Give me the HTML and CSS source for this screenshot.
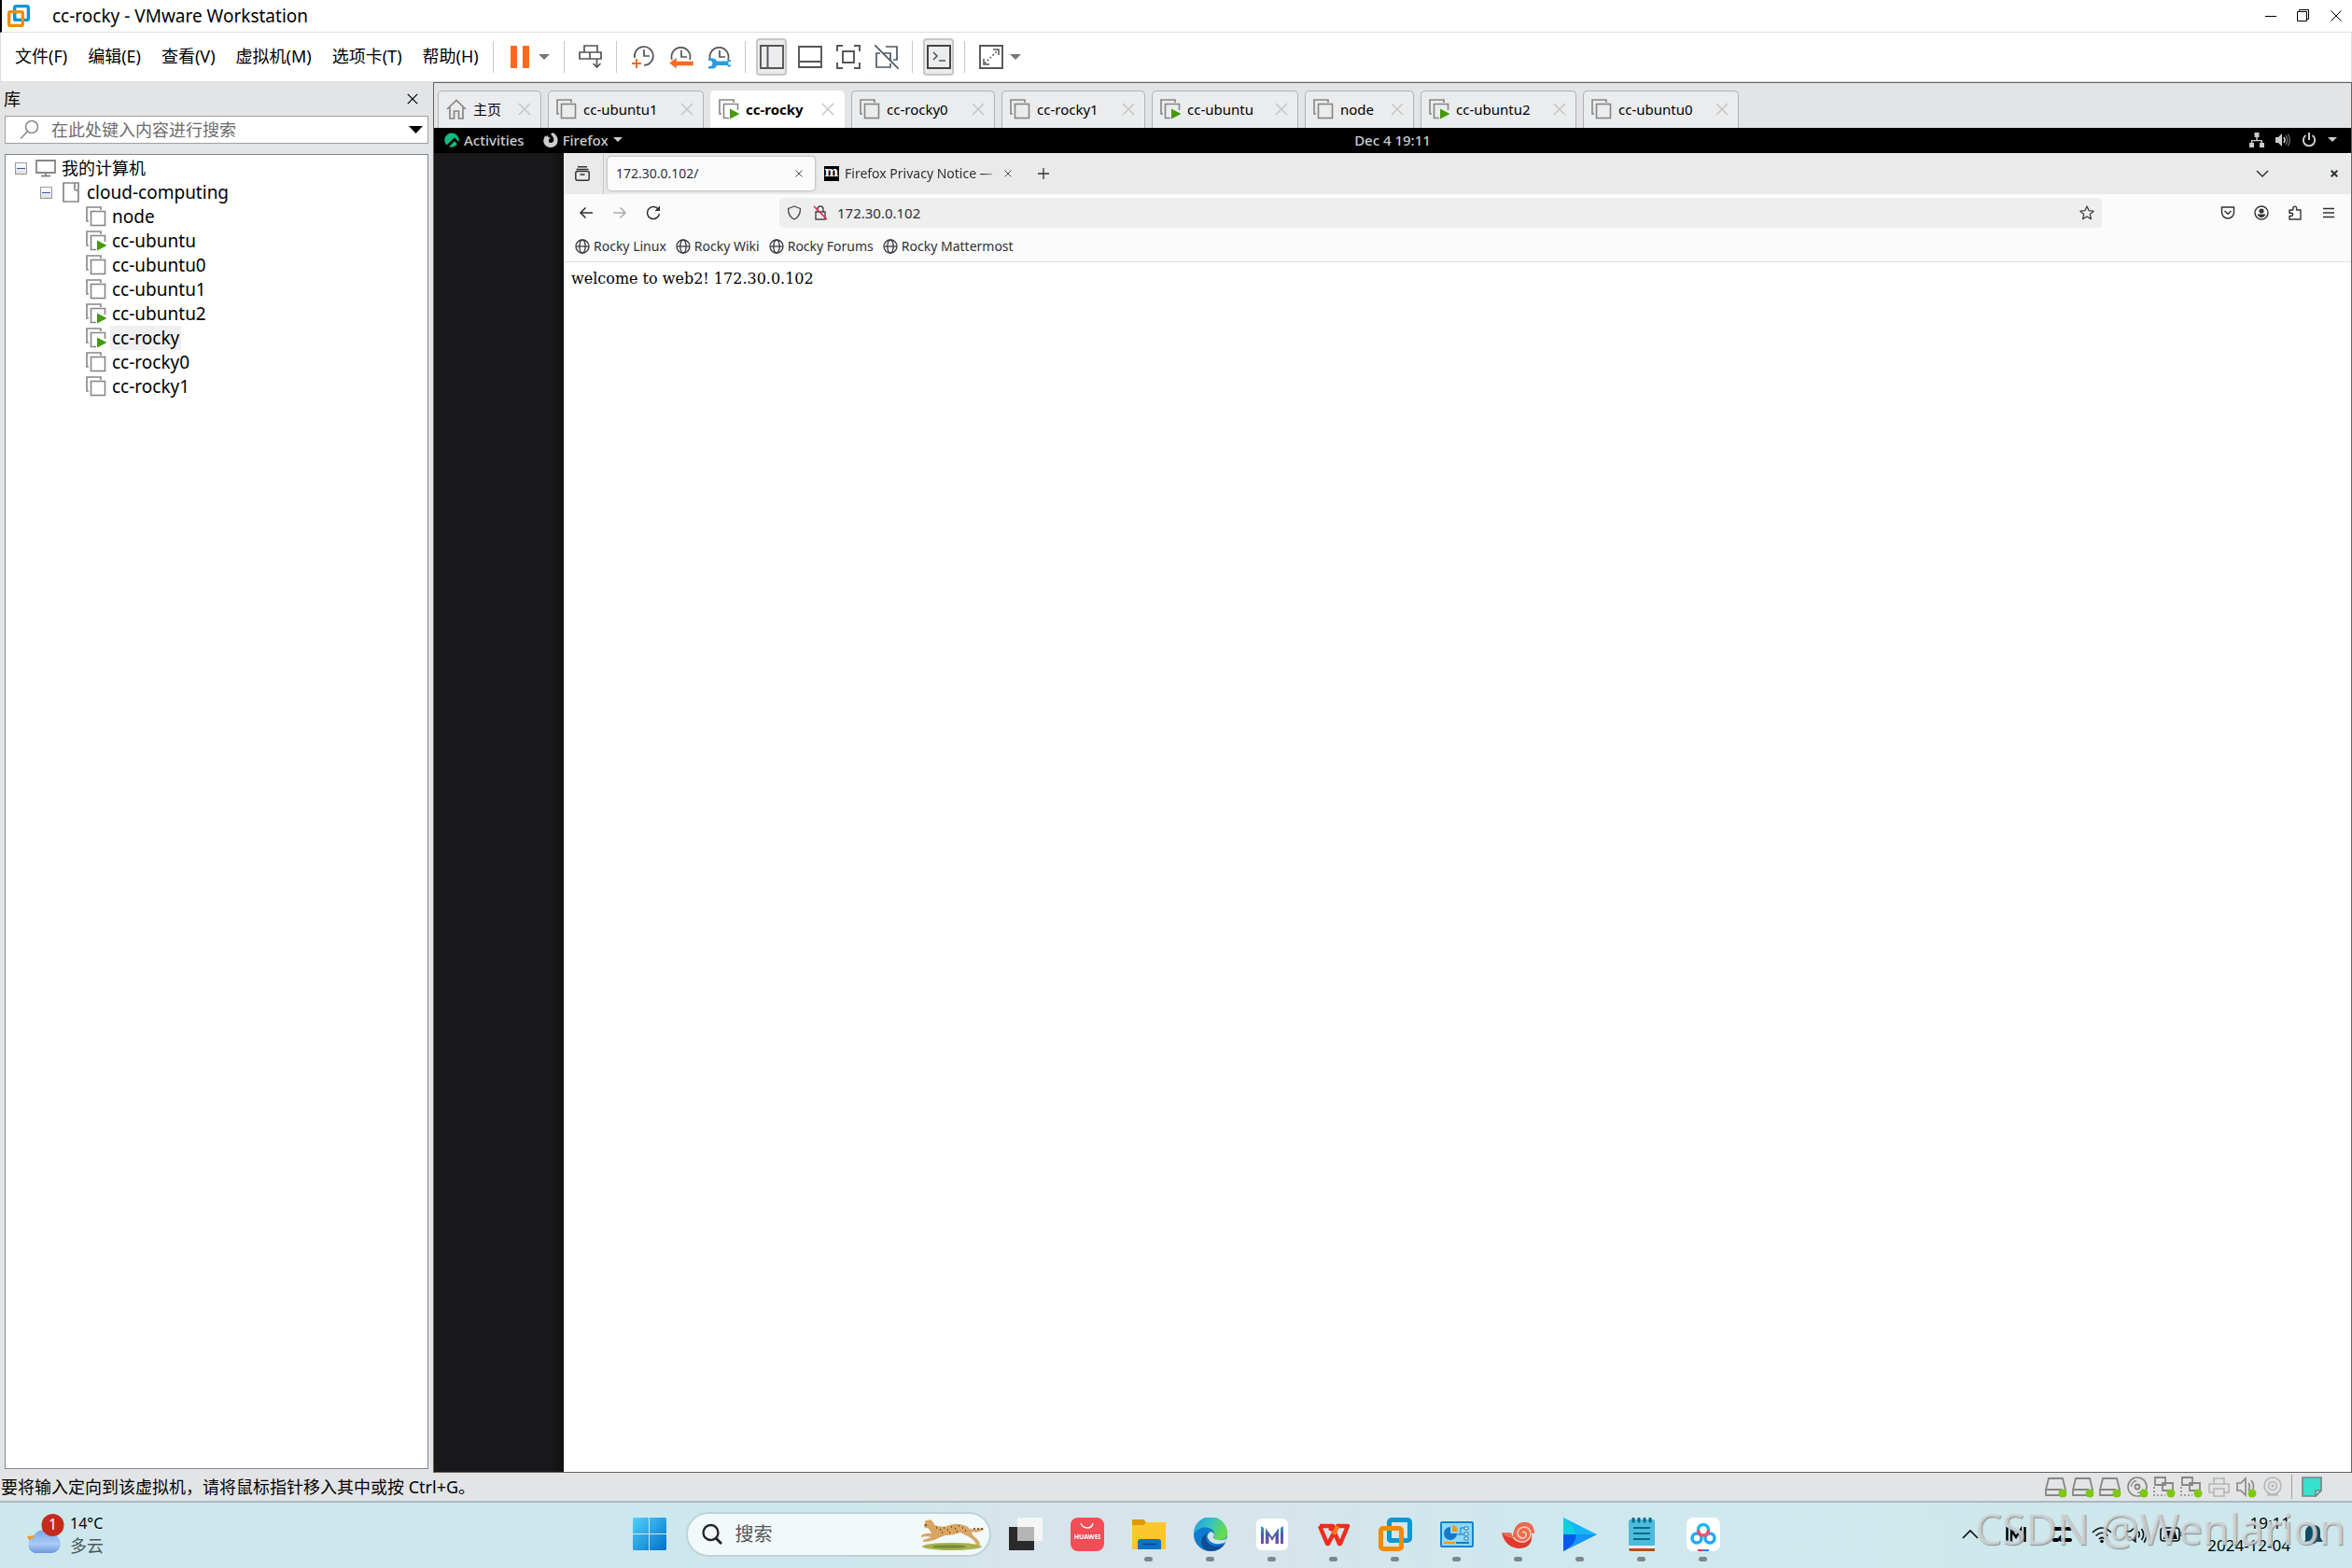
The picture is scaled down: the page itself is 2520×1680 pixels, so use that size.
FILE: index.html
```html
<!DOCTYPE html>
<html lang="zh-CN">
<head>
<meta charset="utf-8">
<title>cc-rocky - VMware Workstation</title>
<link rel="stylesheet" href="styles.css">
</head>
<body>
<svg class="defs" aria-hidden="true">
  <symbol id="vm" viewBox="0 0 22 22"><path d="M3 16H1V1h15v3" fill="none" stroke="#868686" stroke-width="1.6"/><rect x="5.5" y="5.5" width="15" height="15" fill="none" stroke="#868686" stroke-width="1.6"/></symbol>
  <symbol id="vm-on" viewBox="0 0 22 22"><path d="M3 16H1V1h15v3" fill="none" stroke="#868686" stroke-width="1.6"/><path d="M11 20.5H5.500V5.500h15V12" fill="none" stroke="#868686" stroke-width="1.6"/><path d="M12 10.500l10.500 5.500-10.500 5.500z" fill="#459a0e"/></symbol>
  <symbol id="x" viewBox="0 0 14 14"><path d="M1 1l12 12M13 1L1 13" fill="none" stroke="currentColor" stroke-width="1.5"/></symbol>
  <symbol id="down" viewBox="0 0 12 6"><path d="M0 0h12L6 6z" fill="currentColor"/></symbol>
  <symbol id="clock" viewBox="0 0 26 26"><path d="M3 16A10 10 0 1 1 22 16" fill="none" stroke="#555" stroke-width="1.7"/><path d="M13 6v7h6" fill="none" stroke="#555" stroke-width="1.7"/></symbol>
  <symbol id="globe" viewBox="0 0 16 16"><g fill="none" stroke="#3a3a40" stroke-width="1.3"><circle cx="8" cy="8" r="7"/><ellipse cx="8" cy="8" rx="3.200" ry="7"/><path d="M1 8h14"/></g></symbol>
  <symbol id="vmware" viewBox="0 0 36 36"><rect x="11.500" y="2.500" width="22" height="22" rx="2.500" fill="none" stroke="#0a98d6" stroke-width="5"/><rect x="2.500" y="11.500" width="22" height="22" rx="2.500" fill="none" stroke="#f38b00" stroke-width="5"/><path d="M11.500 14v8.500q0 2 2 2H20" fill="none" stroke="#0a98d6" stroke-width="5"/><path d="M9 11.500h8" stroke="#f38b00" stroke-width="5"/></symbol>
  <symbol id="drive" viewBox="0 0 26 24"><path d="M5 3h15l3 12v6H2v-6zM2 15h17" fill="none" stroke="#868686" stroke-width="1.800"/><circle cx="20" cy="19" r="4.500" fill="#7ec814"/></symbol>
  <symbol id="net" viewBox="0 0 26 24"><path d="M3 2h11v8H3zM11 8h11v8H11z" fill="#e3e4e6" stroke="#868686" stroke-width="1.800"/><path d="M2 12v9h12" fill="none" stroke="#868686" stroke-width="1.600" stroke-dasharray="2 2"/><circle cx="20" cy="19" r="4.500" fill="#7ec814"/></symbol>
</svg>

<header class="titlebar">
  <svg class="i24" viewBox="0 0 36 36"><use href="#vmware"/></svg>
  <h1 class="titlebar-text">cc-rocky - VMware Workstation</h1>
  <div class="window-controls">
    <button class="wc" aria-label="最小化"><svg class="i12" viewBox="0 0 12 12"><path d="M0 6.500h12" stroke="#000"/></svg></button>
    <button class="wc" aria-label="还原"><svg class="i14" viewBox="0 0 14 14"><path d="M.5 2.500h10v10H.500zM2.500 2V.500h10v10H11" fill="none" stroke="#000"/></svg></button>
    <button class="wc" aria-label="关闭"><svg class="i12" viewBox="0 0 12 12"><path d="M.5.5l11 11M11.500.500l-11 11" stroke="#000"/></svg></button>
  </div>
</header>

<div class="menubar">
  <nav class="menus">
    <button class="menu">文件(F)</button><button class="menu">编辑(E)</button><button class="menu">查看(V)</button><button class="menu">虚拟机(M)</button><button class="menu">选项卡(T)</button><button class="menu">帮助(H)</button>
  </nav>
  <span class="sep"></span>
  <button class="tool" aria-label="挂起"><svg class="i26" viewBox="0 0 26 26"><path d="M3 1h7v24H3zM16 1h7v24h-7z" fill="#fc6a21"/></svg></button>
  <button class="tool-drop" aria-label="电源选项"><svg class="arrow"><use href="#down"/></svg></button>
  <span class="sep"></span>
  <button class="tool" aria-label="发送按键"><svg class="i26" viewBox="0 0 26 26"><path d="M6 1h14v7H6zM1 8h11v7H1zM12 8h12v7H12zM19.500 15v8M15.500 20l4 4 4-4" fill="none" stroke="#555" stroke-width="1.700"/></svg></button>
  <span class="sep"></span>
  <div class="tool-group">
    <button class="tool" aria-label="拍摄快照"><svg class="i26" viewBox="0 0 26 26"><path d="M4 14A10 10 0 1 1 14 22M14 5v7h6" fill="none" stroke="#555" stroke-width="1.700"/><path d="M1 20h10M6 15v10" stroke="#fc6a21" stroke-width="2"/></svg></button>
    <button class="tool" aria-label="恢复快照"><svg class="i26" viewBox="0 0 26 26"><use href="#clock"/><path d="M0 19.500l8-6v4h18v5H8v3.500z" fill="#fc6a21" stroke="#fff" stroke-width=".5"/></svg></button>
    <button class="tool" aria-label="管理快照"><svg class="i26" viewBox="0 0 26 26"><use href="#clock"/><path d="M1 14.500h4.500a5 5 0 0 1 4.500 3h11l1-1.500h3v2h-2.500v3.500H25v2h-3l-1-1.500H10a5 5 0 0 1-4.500 3.500H1v-2.500h3l1.500-3.500L4 17H1z" fill="#2e9be0"/></svg></button>
  </div>
  <span class="sep"></span>
  <div class="tool-group">
    <button class="tool tool--on" aria-label="显示库"><svg class="i26" viewBox="0 0 26 26"><path d="M1 1h24v24H1zM8.500 1v24" fill="none" stroke="#555" stroke-width="1.900"/></svg></button>
    <button class="tool" aria-label="缩略图栏"><svg class="i26" viewBox="0 0 26 26"><path d="M1 2h24v22H1zM1 18h24" fill="none" stroke="#555" stroke-width="1.900"/></svg></button>
    <button class="tool" aria-label="全屏"><svg class="i26" viewBox="0 0 26 26"><path d="M1 7V1h6M19 1h6v6M25 19v6h-6M7 25H1v-6M7 7h12v12H7z" fill="none" stroke="#555" stroke-width="1.900"/></svg></button>
    <button class="tool" aria-label="Unity"><svg class="i26" viewBox="0 0 26 26"><path d="M12 2h12v14h-4M6 9H2v15h15v-4M9 9h8v8M0 0l26 26" fill="none" stroke="#4b5a66" stroke-width="1.700"/></svg></button>
  </div>
  <span class="sep"></span>
  <button class="tool tool--on" aria-label="控制台"><svg class="i26" viewBox="0 0 26 26"><path d="M1 1h24v24H1z" fill="none" stroke="#444" stroke-width="2"/><path d="M7 8l4 4-4 4M13 17h7" fill="none" stroke="#555" stroke-width="1.600"/></svg></button>
  <span class="sep"></span>
  <button class="tool" aria-label="拉伸"><svg class="i26" viewBox="0 0 26 26"><path d="M1 1h24v24H1z" fill="none" stroke="#555" stroke-width="1.900"/><path d="M15 5h6v6M5 15v6h6" fill="none" stroke="#555" stroke-width="1.500"/><path d="M6 20L20 6" stroke="#555" stroke-width="1.500" stroke-dasharray="2 2"/></svg></button>
  <button class="tool-drop" aria-label="拉伸选项"><svg class="arrow"><use href="#down"/></svg></button>
</div>

<main class="workspace">
  <aside class="library">
    <div class="library-head"><h2 class="library-title">库</h2><button class="library-close" aria-label="关闭库"><svg class="i12"><use href="#x"/></svg></button></div>
    <div class="library-search">
      <svg class="i22" viewBox="0 0 22 22"><circle cx="14" cy="8" r="6.500" fill="none" stroke="#8a8a8a" stroke-width="1.600"/><path d="M9.500 13L2 20.500" stroke="#8a8a8a" stroke-width="1.600"/></svg>
      <input class="library-input" type="text" aria-label="搜索库" placeholder="在此处键入内容进行搜索">
      <svg class="search-arrow" viewBox="0 0 12 6" preserveAspectRatio="none"><path d="M0 0h12L6 6z"/></svg>
    </div>
    <ul class="tree">
      <li class="node"><span class="toggle"></span><svg class="i22" viewBox="0 0 22 22"><path d="M1 3h20v13H1zM11 16v4M6 19.500h10" fill="none" stroke="#868686" stroke-width="1.800"/></svg><span class="label label--cjk">我的计算机</span></li>
      <li class="node node--2"><span class="toggle"></span><svg class="i22" viewBox="0 0 22 22"><path d="M15 1H3v20h16V9M15 1v7q2 2 4 0V1z" fill="none" stroke="#868686" stroke-width="1.700"/></svg><span class="label">cloud-computing</span></li>
      <li class="node node--3"><svg class="i22"><use href="#vm"/></svg><span class="label">node</span></li>
      <li class="node node--3"><svg class="i22"><use href="#vm-on"/></svg><span class="label">cc-ubuntu</span></li>
      <li class="node node--3"><svg class="i22"><use href="#vm"/></svg><span class="label">cc-ubuntu0</span></li>
      <li class="node node--3"><svg class="i22"><use href="#vm"/></svg><span class="label">cc-ubuntu1</span></li>
      <li class="node node--3"><svg class="i22"><use href="#vm-on"/></svg><span class="label">cc-ubuntu2</span></li>
      <li class="node node--3"><svg class="i22"><use href="#vm-on"/></svg><span class="label label--selected">cc-rocky</span></li>
      <li class="node node--3"><svg class="i22"><use href="#vm"/></svg><span class="label">cc-rocky0</span></li>
      <li class="node node--3"><svg class="i22"><use href="#vm"/></svg><span class="label">cc-rocky1</span></li>
    </ul>
  </aside>

  <section class="vm">
    <div class="vm-tabs">
      <div class="vm-tab vm-tab--home"><svg class="i22" viewBox="0 0 22 22"><path d="M1 11L11 1.500 21 11M4 9v12h4.500v-8h5v8H18V9" fill="none" stroke="#868686" stroke-width="1.700"/></svg><span>主页</span><button class="vm-close" aria-label="关闭"><svg class="i14"><use href="#x"/></svg></button></div>
      <div class="vm-tab vm-tab--long"><svg class="i22"><use href="#vm"/></svg><span>cc-ubuntu1</span><button class="vm-close" aria-label="关闭"><svg class="i14"><use href="#x"/></svg></button></div>
      <div class="vm-tab vm-tab--active"><svg class="i22"><use href="#vm-on"/></svg><span>cc-rocky</span><button class="vm-close" aria-label="关闭"><svg class="i14"><use href="#x"/></svg></button></div>
      <div class="vm-tab vm-tab--mid"><svg class="i22"><use href="#vm"/></svg><span>cc-rocky0</span><button class="vm-close" aria-label="关闭"><svg class="i14"><use href="#x"/></svg></button></div>
      <div class="vm-tab vm-tab--mid"><svg class="i22"><use href="#vm"/></svg><span>cc-rocky1</span><button class="vm-close" aria-label="关闭"><svg class="i14"><use href="#x"/></svg></button></div>
      <div class="vm-tab vm-tab--ubuntu"><svg class="i22"><use href="#vm-on"/></svg><span>cc-ubuntu</span><button class="vm-close" aria-label="关闭"><svg class="i14"><use href="#x"/></svg></button></div>
      <div class="vm-tab vm-tab--short"><svg class="i22"><use href="#vm"/></svg><span>node</span><button class="vm-close" aria-label="关闭"><svg class="i14"><use href="#x"/></svg></button></div>
      <div class="vm-tab vm-tab--long"><svg class="i22"><use href="#vm-on"/></svg><span>cc-ubuntu2</span><button class="vm-close" aria-label="关闭"><svg class="i14"><use href="#x"/></svg></button></div>
      <div class="vm-tab vm-tab--long"><svg class="i22"><use href="#vm"/></svg><span>cc-ubuntu0</span><button class="vm-close" aria-label="关闭"><svg class="i14"><use href="#x"/></svg></button></div>
    </div>

    <div class="gnome">
      <div class="gnome-left">
        <button class="gnome-btn"><svg class="i16" viewBox="0 0 16 16"><path d="M2.500 13.500A7.700 7.700 0 1 1 15.500 10L11 5.500z" fill="#12b981"/><path d="M5 15.300L11 9.200l3 3Q10 17 5 15.300z" fill="#12b981"/></svg><span>Activities</span></button>
        <button class="gnome-btn"><svg class="i16" viewBox="0 0 16 16"><path d="M8 16A7.500 7 0 0 1 1 6l1-3 1 1.500L5 3l.500 2L8 6 6 7.500Q5.500 11 8.500 11 12 10.500 11 6 10 3 8 2l2-2q6 3 5.500 9A7.500 7 0 0 1 8 16z" fill="#ccc"/></svg><span>Firefox</span><svg class="gnome-arrow" viewBox="0 0 12 6"><use href="#down"/></svg></button>
      </div>
      <time class="gnome-clock">Dec 4 19:11</time>
      <div class="gnome-right">
        <svg class="i16" viewBox="0 0 16 16"><path d="M5.500 0h5v5h-5zM0 11h5v5H0zM11 11h5v5h-5zM7.300 5h1.400v3H14v3h-1.400V9.200H3.400V11H2V8h5.300z" fill="#ccc"/></svg>
        <svg class="i16" viewBox="0 0 16 16"><path d="M0 5h3l4-4v14l-4-4H0z" fill="#ccc"/><path d="M9 5q2 3 0 6" fill="none" stroke="#ccc" stroke-width="1.600"/><path d="M11 3q3.500 5 0 10M13.300 1.500q4 6.500 0 13" fill="none" stroke="#666" stroke-width="1.400"/></svg>
        <svg class="i16" viewBox="0 0 16 16"><path d="M4.500 3a6.200 6.200 0 1 0 7 0M8 0v8" fill="none" stroke="#ccc" stroke-width="2"/></svg>
        <svg class="gnome-arrow" viewBox="0 0 12 6"><use href="#down"/></svg>
      </div>
    </div>

    <div class="desktop">
      <div class="browser">
        <div class="tabstrip">
          <button class="ff-view" aria-label="Firefox View"><svg class="i16" viewBox="0 0 16 16"><path d="M3 .8h10M1.500 3.500h13" stroke="#333" stroke-width="1.400"/><rect x=".8" y="5.500" width="14.400" height="9.700" rx="2" fill="none" stroke="#333" stroke-width="1.500"/><path d="M5.500 9h5" stroke="#333" stroke-width="1.500"/></svg></button>
          <div class="ff-tab ff-tab--active"><span class="ff-tab-text">172.30.0.102/</span><button class="ff-close" aria-label="Close"><svg class="i8"><use href="#x"/></svg></button></div>
          <div class="ff-tab"><span class="moz">m</span><span class="ff-tab-text ff-tab-text--fade">Firefox Privacy Notice — Mozilla</span><button class="ff-close" aria-label="Close"><svg class="i8"><use href="#x"/></svg></button></div>
          <button class="ff-new" aria-label="New tab"><svg class="i12" viewBox="0 0 12 12"><path d="M6 0v12M0 6h12" stroke="#333" stroke-width="1.300"/></svg></button>
          <button class="ff-btn ff-list" aria-label="List tabs"><svg class="i14" viewBox="0 0 14 14"><path d="M1 4l6 6 6-6" fill="none" stroke="#333" stroke-width="1.500"/></svg></button>
          <button class="ff-btn ff-quit" aria-label="Close window"><svg class="i8" viewBox="0 0 8 8"><path d="M.7.7l6.600 6.600M7.300.7L.7 7.300" stroke="#2e3436" stroke-width="2"/></svg></button>
        </div>
        <div class="navbar">
          <button class="ff-btn" aria-label="Back"><svg class="i16" viewBox="0 0 16 16"><path d="M15 8H2M7.500 2.500L2 8l5.500 5.500" fill="none" stroke="#2e2e33" stroke-width="1.500"/></svg></button>
          <button class="ff-btn" aria-label="Forward"><svg class="i16" viewBox="0 0 16 16"><path d="M1 8h13M8.500 2.500L14 8l-5.500 5.500" fill="none" stroke="#aaa" stroke-width="1.500"/></svg></button>
          <button class="ff-btn" aria-label="Reload"><svg class="i16" viewBox="0 0 16 16"><path d="M13.500 4.500A6.500 6.500 0 1 0 14.500 9" fill="none" stroke="#2e2e33" stroke-width="1.500"/><path d="M15 .5V6H9.500z" fill="#2e2e33"/></svg></button>
          <div class="urlbar">
            <svg class="i16" viewBox="0 0 16 16"><path d="M8 1l6.500 2.500q0 8.500-6.500 11.500Q1.500 12 1.500 3.500z" fill="none" stroke="#444" stroke-width="1.300" stroke-linejoin="round"/></svg>
            <svg class="i16 lock" viewBox="0 0 16 16"><path d="M3 7h10v8H3zM5 7V4q0-3 3-3t3 3v3" fill="none" stroke="#444" stroke-width="1.400"/><path d="M1 1l14 14" stroke="#e22850" stroke-width="1.600"/></svg>
            <input class="url" type="text" aria-label="Address" value="172.30.0.102">
            <svg class="i16" viewBox="0 0 16 16"><path d="M8 1l2.100 4.700 5 .5-3.800 3.400 1.100 5L8 12l-4.400 2.600 1.100-5L.9 6.200l5-.5z" fill="none" stroke="#444" stroke-width="1.300" stroke-linejoin="round"/></svg>
          </div>
          <button class="ff-btn" aria-label="Pocket"><svg class="i16" viewBox="0 0 16 16"><path d="M1.500 2h13v5.500a6.500 6.500 0 0 1-13 0zM4.500 6L8 9.300 11.500 6" fill="none" stroke="#333" stroke-width="1.500"/></svg></button>
          <button class="ff-btn" aria-label="Account"><svg class="i16" viewBox="0 0 16 16"><circle cx="8" cy="8" r="7" fill="none" stroke="#333" stroke-width="1.400"/><circle cx="8" cy="6" r="2.600" fill="#333"/><path d="M3.500 9.500h9Q11 13 8 13T3.500 9.500z" fill="#333"/></svg></button>
          <button class="ff-btn" aria-label="Extensions"><svg class="i16" viewBox="0 0 16 16"><path d="M2 15V11.500h2a1.600 1.600 0 0 0 0-3.300H2V5h3.800V3a1.900 1.900 0 0 1 3.800 0v2H14v10z" fill="none" stroke="#333" stroke-width="1.400" stroke-linejoin="round"/></svg></button>
          <button class="ff-btn" aria-label="Menu"><svg class="i12" viewBox="0 0 12 12"><path d="M0 1.500h12M0 6h12M0 10.500h12" stroke="#333" stroke-width="1.300"/></svg></button>
        </div>
        <nav class="bookmarks">
          <a class="bookmark" href="#"><svg class="i16"><use href="#globe"/></svg>Rocky Linux</a>
          <a class="bookmark" href="#"><svg class="i16"><use href="#globe"/></svg>Rocky Wiki</a>
          <a class="bookmark" href="#"><svg class="i16"><use href="#globe"/></svg>Rocky Forums</a>
          <a class="bookmark" href="#"><svg class="i16"><use href="#globe"/></svg>Rocky Mattermost</a>
        </nav>
        <article class="webpage">welcome to web2! 172.30.0.102</article>
      </div>
    </div>
  </section>
</main>

<div class="statusbar">
  <p class="status-text">要将输入定向到该虚拟机，请将鼠标指针移入其中或按 Ctrl+G。</p>
  <div class="devices">
    <svg class="device"><use href="#drive"/></svg><svg class="device"><use href="#drive"/></svg><svg class="device"><use href="#drive"/></svg>
    <svg class="device" viewBox="0 0 26 24"><circle cx="13" cy="12" r="10" fill="none" stroke="#868686" stroke-width="1.600"/><circle cx="13" cy="12" r="2.500" fill="none" stroke="#868686" stroke-width="1.800"/><path d="M6.500 12A6.500 6.500 0 0 1 12 5.500M13 18.500q4 0 6-4" fill="none" stroke="#868686" stroke-width="1.400"/><circle cx="20" cy="19" r="4.500" fill="#7ec814"/></svg>
    <svg class="device"><use href="#net"/></svg><svg class="device"><use href="#net"/></svg>
    <svg class="device" viewBox="0 0 26 24"><path d="M8 9V3h11v6M8 18H3V9h21v9h-5M8 14h11v8H8z" fill="none" stroke="#b4b4b4" stroke-width="1.600"/></svg>
    <svg class="device" viewBox="0 0 26 24"><path d="M4 8h4l5-5v18l-5-5H4zM16 8q2.500 4 0 8M19 5q4.500 6 1 12" fill="none" stroke="#868686" stroke-width="1.600"/><circle cx="20" cy="19" r="4.500" fill="#7ec814"/></svg>
    <svg class="device" viewBox="0 0 26 24"><g fill="none" stroke="#b4b4b4" stroke-width="1.500"><circle cx="13" cy="11" r="9"/><circle cx="13" cy="11" r="4.500"/><path d="M8 19v2h10v-2"/></g><circle cx="13" cy="11" r="1.500" fill="#b4b4b4"/></svg>
  </div>
  <span class="status-sep"></span>
  <svg class="i22" viewBox="0 0 22 22"><path d="M1 1h20v14l-6 6H1z" fill="#36e2cb" stroke="#7d8585" stroke-width="1.700"/><path d="M15 21v-6h6z" fill="#9be9de" stroke="#7d8585" stroke-width="1.500"/></svg>
</div>

<footer class="taskbar">
  <button class="weather">
    <svg class="weather-icon" viewBox="0 0 42 46"><defs><linearGradient id="cl" x2="0" y2="1"><stop offset="0" stop-color="#7da5e8"/><stop offset=".6" stop-color="#a9cbf8"/><stop offset="1" stop-color="#6f96de"/></linearGradient></defs><path d="M18 8q6 16-16 17 4 11 14 9 12-4 9-16-2-7-7-10z" fill="#f29a25"/><path d="M10 43a9 9 0 0 1-1-17 10 10 0 0 1 18-3 10 10 0 0 1 2 20z" fill="url(#cl)"/><circle cx="29.500" cy="13" r="12" fill="#c42b1c"/></svg>
    <span class="badge">1</span>
    <span class="weather-text"><span class="temp">14°C</span><span class="sky">多云</span></span>
  </button>

  <div class="dock">
    <button class="app" aria-label="开始"><svg class="i36" viewBox="0 0 36 36"><defs><linearGradient id="wn" x2="1" y2="1"><stop offset="0" stop-color="#52d2fb"/><stop offset="1" stop-color="#016fca"/></linearGradient></defs><path d="M1 0h16v17H0V1zM18 0h17l1 1v16H18zM0 18h17v17H1l-1-1zM18 18h18v16l-1 1H18z" fill="url(#wn)"/></svg></button>
    <label class="search">
      <svg class="i24" viewBox="0 0 24 24"><circle cx="10.500" cy="10" r="8" fill="none" stroke="#222" stroke-width="2.300"/><path d="M16 16l6 6" stroke="#222" stroke-width="2.800"/></svg>
      <input class="search-input" type="text" aria-label="搜索" placeholder="搜索">
      <svg class="cat" viewBox="0 0 68 34"><ellipse cx="33" cy="30" rx="32" ry="4" fill="#a9b054"/><ellipse cx="30" cy="30" rx="18" ry="1.800" fill="#738c35"/><path d="M4 5q0-4 3-3 3-2 5 1 2 2 2 4 9 3 14 1 8-4 17-1 5 1 7 4 6 2 14-1l1 2q-7 4-13 2 0 4 6 8 3 3 3 6h-4q-2-5-7-8-6-3-10-5-8 3-16 3-6 2-12 5-6 2-12 2v-2l9-3-6-1-5 1v-2q5-3 11-2-2-4-4-6-4 1-4-3z" fill="#d9a563"/><path d="M16 10h1M20 12h1M24 10h1M28 12h1M32 9h1M36 11h1M40 8h1M44 10h1M47 13h1M38 14h1M30 15h1M22 15h1M56 11h2M60 11h2M64 11h2M4 7h2" stroke="#59391d" stroke-width="1.300"/></svg>
    </label>
    <button class="app" aria-label="任务视图"><svg class="i36" viewBox="0 0 36 36"><path d="M0 10h27v25H0z" fill="#2a2a2a"/><path d="M9 0h27v25H9z" fill="#f5f5f5"/><path d="M9 10h18v15H9z" fill="#b5b5b5"/></svg></button>
    <button class="app" aria-label="华为应用市场"><svg class="i36" viewBox="0 0 36 36"><rect width="36" height="36" rx="8" fill="#f34d56"/><path d="M11 6q2 5 7 5t6-5" fill="none" stroke="#fff" stroke-width="1.400"/><text x="18" y="23" text-anchor="middle" class="huawei">HUAWEI</text></svg></button>
    <button class="app app--run" aria-label="文件资源管理器"><svg class="i36" viewBox="0 0 36 36"><path d="M0 2h12l3 3h21v29H0z" fill="#fcc62d"/><path d="M0 2h12l3 3-3 3H0z" fill="#db9a07"/><path d="M6 34v-8q0-3 3-3h19q3 0 3 3v8z" fill="#0a73ca"/><path d="M11 28.500h15" stroke="#06479a" stroke-width="1.500"/></svg></button>
    <button class="app app--run" aria-label="Edge"><svg class="i36" viewBox="0 0 36 36"><defs><linearGradient id="eg" x2="1" y2=".4"><stop offset="0" stop-color="#1c9ae0"/><stop offset=".5" stop-color="#35c1c8"/><stop offset="1" stop-color="#66dc4c"/></linearGradient></defs><circle cx="18" cy="18" r="18" fill="#0f7bd0"/><path d="M0 17A18 18 0 0 1 36 17q0 7-8 7-8 0-7-3 3-4-1-8Q10 6 0 17z" fill="url(#eg)"/><path d="M14 17q-3 10 6 13 8 2 14-3-5 9-16 9-10-1-10-10 0-6 6-9z" fill="#104d97"/><path d="M18 15q-6 4-1 10 5 5 16 2l3-5q-5 3-10 2-8-1-4-5 0-3-4-4z" fill="#d3e5ea"/></svg></button>
    <button class="app app--run" aria-label="M"><svg class="i36" viewBox="0 0 36 36"><defs><linearGradient id="mg" x2="0" y2="1"><stop offset="0" stop-color="#36a0b8"/><stop offset=".5" stop-color="#4a5ba5"/><stop offset="1" stop-color="#7a4fa8"/></linearGradient></defs><rect x="1" y="1" width="34" height="34" rx="6" fill="#fff"/><path d="M6 9l3 2v17H6zM30 9l-3 2v17h3zM11 28V11l7 10 7-10v17h-3.500V19L18 25l-3.500-6v9z" fill="url(#mg)"/></svg></button>
    <button class="app app--run" aria-label="WPS"><svg class="i36" viewBox="0 0 36 36"><path d="M3 9h14l-3 5M3 9l8 19h1l10-19h11l-8 19h-1l-6-14" fill="none" stroke="#ef2c1d" stroke-width="4.500" stroke-linejoin="round"/><path d="M18 18l4-9" stroke="#f97722" stroke-width="4.500"/></svg></button>
    <button class="app app--run" aria-label="VMware"><svg class="i36"><use href="#vmware"/></svg></button>
    <button class="app app--run" aria-label="控制面板"><svg class="i36" viewBox="0 0 36 36"><rect x="1" y="5" width="34" height="26" rx="1" fill="#8cd9f8" stroke="#1783cc" stroke-width="2"/><path d="M11 10a7 7 0 1 0 7 7h-7z" fill="#1677c8"/><path d="M13 8a7 7 0 0 1 6 7h-6z" fill="#f89710"/><path d="M18 18h4v-7h4M22 18h4" fill="none" stroke="#1677c8"/><path d="M26 10h4v3h-4zM26 16h4v3h-4zM26 21h4v3h-4z" fill="#fff" stroke="#1677c8"/><path d="M4 27h12" stroke="#f89710" stroke-width="2"/><path d="M17 27h14" stroke="#1677c8" stroke-width="2"/></svg></button>
    <button class="app app--run" aria-label="海螺"><svg class="i36" viewBox="0 0 36 36"><path d="M0 16.500h10l2 5Q13 5 25 5q9 0 10 11.500h-3Q34 33 18 33 4 32 0 16.500z" fill="#e2382e"/><path d="M0 16.500h10l2 5Q13 5 25 5q9 0 10 11.500h-3q-1 8-8 9-8-1-12-4-6 1-12-5z" fill="#ec6a4c"/><path d="M12 21q5 6 12 5 7-2 7-9-1-7-7-7-7 1-7 7 1 5 6 5 4-1 3-5-2-3-4-1" fill="none" stroke="#f8cfc4" stroke-width="1.600"/></svg></button>
    <button class="app app--run" aria-label="播放"><svg class="i36" viewBox="0 0 36 36"><path d="M0 0l36 18L0 36z" fill="#15b5f8"/><path d="M0 18V0q13 8 13 18z" fill="#0fd0de"/><path d="M0 18h14q0 11-14 18z" fill="#0759ee"/><path d="M14 18h22L6 33q8-6 8-15z" fill="#1595f5"/></svg></button>
    <button class="app app--run" aria-label="记事本"><svg class="i36" viewBox="0 0 36 36"><rect x="4" y="2" width="28" height="29" rx="2" fill="#4dbbd9"/><path d="M4 30h28v3H4z" fill="#eee"/><path d="M4 33h28v3H5z" fill="#b15314"/><path d="M9 11h18M9 17h18M9 23h18" stroke="#08698c" stroke-width="2"/><path d="M9 1v3M15 1v3M21 1v3M27 1v3" stroke="#08698c" stroke-width="3" stroke-linecap="round"/></svg></button>
    <button class="app app--run" aria-label="百度网盘"><svg class="i36" viewBox="0 0 36 36"><rect width="36" height="36" rx="7" fill="#fff"/><g fill="none" stroke-width="3.500"><circle cx="11" cy="22" r="5" stroke="#20aaf5"/><circle cx="25" cy="22" r="5" stroke="#20aaf5"/><path d="M12.500 13a5.500 5.500 0 0 1 11 0" stroke="#18bdec"/><path d="M23.500 13q0 6-5.500 6t-5.500-6" stroke="#f34f74"/></g><path d="M12 34h6v2h-6z" fill="#f3355f"/><path d="M18 34h6v2h-6z" fill="#2788fa"/></svg></button>
  </div>

  <div class="tray">
    <button class="tray-btn" aria-label="隐藏的图标"><svg class="i18" viewBox="0 0 18 18"><path d="M1 13l8-8 8 8" fill="none" stroke="#111" stroke-width="1.700"/></svg></button>
    <button class="tray-btn" aria-label="管家"><svg class="i22" viewBox="0 0 22 22"><path d="M1.500 3v16M6 19V6l5 8 5-8v13M20.500 3v16" fill="none" stroke="#000" stroke-width="2.500"/></svg></button>
    <button class="tray-btn" aria-label="设置"><svg class="i22" viewBox="0 0 22 22"><path d="M3 5h9M17 5h3M3 17h3M11 17h9" stroke="#000" stroke-width="4" stroke-linecap="round"/><path d="M13 3v4l4-2zM10 12v6l-4-1z" stroke="#000"/></svg></button>
    <button class="tray-btn tray-btn--slim" aria-label="网络"><svg class="i22" viewBox="0 0 22 22"><path d="M1 9q10-10 20 0M4.500 12.500q6.500-6.500 13 0M8 16q3-3 6 0" fill="none" stroke="#111" stroke-width="1.700"/><circle cx="11" cy="18.500" r="1.800"/></svg></button>
    <button class="tray-btn tray-btn--slim" aria-label="音量"><svg class="i24" viewBox="0 0 22 22"><path d="M1 8h4l5-4v14l-5-4H1zM13 8q2 3 0 6M16 5.500q4 5.500 0 11M18.500 3q5 8 0 16" fill="none" stroke="#111" stroke-width="1.500"/></svg></button>
    <button class="tray-btn tray-btn--slim" aria-label="电池"><svg class="i24" viewBox="0 0 24 24"><rect x="1" y="5" width="20" height="14" rx="3" fill="none" stroke="#111" stroke-width="1.600"/><path d="M3.500 17L8 8h8l3 9zM22 9h2v5h-2z"/></svg></button>
    <button class="clock"><span>19:11</span><span>2024-12-04</span></button>
    <button class="bell" aria-label="通知"><svg class="i22" viewBox="0 0 22 22"><path d="M2 17V8Q3 1 10.500 1T18 8v6l3 5H14q-3 4-6 0H1z" fill="#134a5e"/></svg></button>
  </div>
  <div class="watermark">CSDN @Wenlarion</div>
</footer>
</body>
</html>
```
FILE: styles.css
```css
* { box-sizing: border-box; }

body {
  margin: 0;
  min-height: 100vh;
  display: flex;
  flex-direction: column;
  background: #e3e4e6;
  color: #000;
  font-family: "Noto Sans", "Noto Sans CJK SC", sans-serif;
  font-size: 18px;
  line-height: 24px;
}

button {
  margin: 0;
  padding: 0;
  border: 0;
  background: none;
  color: inherit;
  font: inherit;
  display: flex;
  align-items: center;
  justify-content: center;
}

input {
  min-width: 0;
  flex: 1;
  border: 0;
  padding: 0;
  outline: 0;
  background: none;
  font: inherit;
  color: inherit;
}

h1, h2, p, ul { margin: 0; padding: 0; font-weight: 400; font-size: inherit; list-style: none; }
svg { display: block; flex: none; }
.defs { position: absolute; width: 0; height: 0; }
.i8 { width: 8px; height: 8px; }
.i12 { width: 12px; height: 12px; }
.i14 { width: 14px; height: 14px; }
.i16 { width: 16px; height: 16px; }
.i18 { width: 18px; height: 18px; }
.i22 { width: 22px; height: 22px; }
.i24 { width: 24px; height: 24px; }
.i26 { width: 26px; height: 26px; }
.i36 { width: 36px; height: 36px; }

/* Title bar */
.titlebar {
  display: flex;
  align-items: center;
  height: 35px;
  padding-left: 6px;
  background: #fff;
  border-left: 2px solid #000;
  border-bottom: 1px solid #dedede;
}
.titlebar-text { margin-left: 24px; font-size: 19px; }
.window-controls { display: flex; margin-left: auto; }
.wc { width: 35px; height: 34px; }

/* Menu bar and tools */
.menubar {
  display: flex;
  align-items: center;
  height: 53px;
  padding-bottom: 1px;
  background: #fff;
  border: 1px solid #dedede;
  border-top: 0;
}
.menus { display: flex; gap: 22px; width: 516px; padding: 0 0 2px 15px; }
.menu { white-space: nowrap; }
.sep { width: 1px; height: 34px; margin: 0 11px; background: #c8c8c8; }
.tool { width: 33px; height: 40px; border-radius: 4px; }
.tool--on { background: #ebecee; border: 2px solid #c6c6c6; }
.tool-group { display: flex; gap: 8px; }
.tool-drop { width: 20px; height: 40px; color: #777; }
.arrow { width: 12px; height: 6px; }

/* Library */
.workspace { flex: 1; display: flex; }
.library {
  width: 464px;
  flex: none;
  display: flex;
  flex-direction: column;
  padding: 0 5px 4px 4px;
}
.library-head {
  display: flex;
  align-items: center;
  justify-content: space-between;
  height: 36px;
  padding-right: 11px;
}
.library-close { width: 12px; height: 12px; }
.library-search {
  display: flex;
  align-items: center;
  height: 30px;
  margin-left: 1px;
  padding: 0 5px 0 14px;
  border: 1px solid #a0a0a0;
  background: #fff;
}
.library-input { margin-left: 13px; color: #6d6d6d; }
.library-input::placeholder { color: #6d6d6d; opacity: 1; }
.search-arrow { width: 15px; height: 8px; }
.tree {
  flex: 1;
  margin: 11px 0 0 1px;
  padding: 1px 0 0 10px;
  border: 1px solid #828790;
  background: #fff;
}
.node { display: flex; align-items: center; height: 26px; font-size: 19px; }
.node--2 { padding-left: 27px; }
.node--3 { padding-left: 76px; }
.toggle {
  display: flex;
  align-items: center;
  justify-content: center;
  width: 13px;
  height: 13px;
  margin-right: 9px;
  border: 1px solid #999;
  background: linear-gradient(#fff, #e0e0e0);
}
.toggle::before { content: ""; width: 9px; height: 1px; background: #3b57a5; }
.label { margin-left: 4px; padding: 0 2px; line-height: 26px; }
.label--cjk { font-size: 18px; }
.label--selected { background: #f0f0f0; }

/* Virtual machine tabs */
.vm {
  flex: 1;
  min-width: 0;
  display: flex;
  flex-direction: column;
  border: 1px solid #636363;
}
.vm-tabs {
  display: flex;
  align-items: flex-end;
  gap: 7px;
  height: 48px;
  padding-left: 4px;
}
.vm-tab {
  display: flex;
  align-items: center;
  gap: 7px;
  width: 154px;
  height: 40px;
  padding: 0 10px 1px 8px;
  border: 1px solid #b0b2b4;
  border-bottom: 0;
  border-radius: 5px 5px 0 0;
  background: #ebecee;
  font-size: 15px;
  white-space: nowrap;
}
.vm-tab--home { width: 111px; }
.vm-tab--long { width: 167px; }
.vm-tab--ubuntu { width: 157px; }
.vm-tab--short { width: 117px; }
.vm-tab--active { width: 144px; background: #fff; border-color: #fff; font-weight: 700; }
.vm-close { margin-left: auto; color: #c6c6c6; }

/* Guest top bar */
.gnome {
  display: grid;
  grid-template-columns: 1fr auto 1fr;
  align-items: center;
  height: 27px;
  padding: 0 11px 2px;
  background: #000;
  color: #ccc;
  font-size: 15px;
  font-weight: 500;
}
.gnome-left { display: flex; gap: 20px; }
.gnome-btn { gap: 5px; }
.gnome-arrow { width: 10px; height: 5px; }
.gnome-right { display: flex; align-items: center; justify-content: flex-end; gap: 12px; padding-right: 4px; }

/* Guest browser */
.desktop { flex: 1; display: flex; padding-left: 139px; background: linear-gradient(90deg, #19191b 125px, #101011 139px); }
.browser { flex: 1; display: flex; flex-direction: column; min-width: 0; background: #fff; color: #303035; }
.tabstrip {
  display: flex;
  align-items: center;
  height: 44px;
  background: #eaeaea;
  border-top-right-radius: 6px;
  font-size: 14px;
}
.ff-view { width: 43px; height: 44px; padding-right: 2px; border-right: 1px solid #c8c8c8; }
.ff-tab { display: flex; align-items: center; width: 222px; height: 36px; padding: 0 10px; }
.ff-tab--active { margin-left: 4px; padding: 0 12px 0 9px; border-radius: 4px; background: #fbfbfb; box-shadow: 0 0 3px rgba(0, 0, 0, .4); }
.ff-tab-text { flex: 1; min-width: 0; overflow: hidden; white-space: nowrap; }
.ff-tab-text--fade {
  margin-right: 6px;
  -webkit-mask-image: linear-gradient(90deg, #000 90%, transparent);
  mask-image: linear-gradient(90deg, #000 90%, transparent);
}
.ff-close { width: 10px; }
.moz {
  width: 16px;
  height: 16px;
  margin-right: 6px;
  background: #000;
  color: #fff;
  font: 700 14px/13px "DejaVu Serif", serif;
  text-align: center;
}
.ff-new { width: 46px; height: 36px; }
.ff-btn { width: 36px; height: 32px; }
.ff-list { margin-left: auto; }
.ff-quit { margin-left: 41px; }
.navbar { display: flex; align-items: center; height: 40px; padding: 0 6px; background: #fbfbfb; }
.urlbar {
  flex: 1;
  display: flex;
  align-items: center;
  height: 32px;
  margin: 0 117px;
  padding: 0 8px;
  border-radius: 4px;
  background: #eee;
  font-size: 15px;
}
.lock { margin: 0 10px 0 12px; }
.bookmarks {
  display: flex;
  gap: 10px;
  align-items: center;
  height: 33px;
  padding-left: 12px;
  background: #fbfbfb;
  border-bottom: 1px solid #e0e0e0;
  font-size: 14px;
}
.bookmark { display: flex; align-items: center; gap: 4px; color: inherit; text-decoration: none; }
.webpage { padding: 6px 8px; color: #000; font-family: "DejaVu Serif", serif; font-size: 16px; }

/* Status bar */
.statusbar { display: flex; align-items: center; height: 30px; padding: 0 32px 0 1px; }
.status-text { flex: 1; }
.devices { display: flex; gap: 3px; }
.device { width: 26px; height: 24px; }
.status-sep { width: 1px; height: 26px; margin: 0 10px 0 7px; background: #a0a0a0; }

/* Taskbar */
.taskbar {
  position: relative;
  display: grid;
  grid-template-columns: 1fr auto 1fr;
  align-items: center;
  height: 72px;
  border-top: 2px solid #a9babd;
  background: linear-gradient(90deg, #cde8ec 0 36%, #d8e4eb 44% 52%, #cfe8ed 64%, #cde8ec);
}
.weather { position: relative; justify-content: flex-start; padding: 0 0 2px 27px; gap: 6px; width: 160px; }
.weather-icon { width: 42px; height: 46px; }
.badge { position: absolute; left: 52px; top: 1px; color: #fff; font-size: 16px; }
.weather-text { display: flex; flex-direction: column; align-items: flex-start; }
.temp { font-size: 16px; }
.sky { color: #4c5a5e; }
.dock { display: flex; align-items: center; padding-bottom: 2px; }
.app { position: relative; width: 66px; height: 68px; }
.app--run::after {
  content: "";
  position: absolute;
  left: 28px;
  bottom: 5px;
  width: 9px;
  height: 5px;
  border-radius: 3px;
  background: #7c8789;
}
.huawei { fill: #fff; font-size: 7px; font-weight: 700; }
.search {
  display: flex;
  align-items: center;
  width: 327px;
  height: 48px;
  margin: 0 4px 0 6px;
  padding: 0 5px 0 14px;
  border: 2px solid #bdd3d7;
  border-radius: 24px;
  background: #f2f9fb;
  font-size: 20px;
}
.search-input { margin-left: 13px; }
.search-input::placeholder { color: #555; opacity: 1; }
.cat { width: 68px; height: 34px; }
.tray { display: flex; align-items: center; justify-content: flex-end; padding: 0 30px 2px 0; }
.tray-btn { width: 49px; height: 44px; }
.tray-btn--slim { width: 37px; }
.clock { flex-direction: column; align-items: flex-end; min-width: 92px; margin: 0 14px 0 18px; font-size: 17px; }
.watermark {
  position: absolute;
  right: 7px;
  bottom: 20px;
  color: rgba(224, 224, 226, .75);
  font-size: 46px;
  line-height: 46px;
  white-space: nowrap;
  text-shadow: 1px 1px 1px rgba(110, 120, 125, .8);
  pointer-events: none;
}
```
